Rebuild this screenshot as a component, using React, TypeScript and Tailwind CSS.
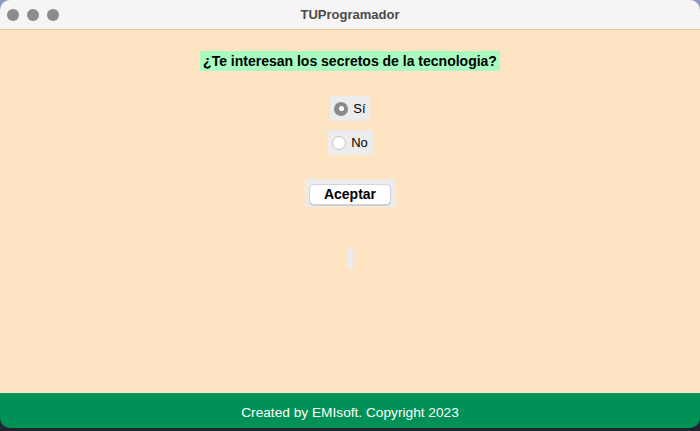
import { useState } from "react";

export default function App() {
  const [answer, setAnswer] = useState<"si" | "no">("si");

  return (
    <div className="h-[431px] w-[700px] overflow-hidden bg-linear-to-b from-[#8e9bc8] via-[#5b6488] to-[#1f2430] font-['Liberation_Sans',Arial,sans-serif]">
      <div className="flex h-[428px] w-[700px] flex-col overflow-hidden rounded-[10px]">
        {/* title bar */}
        <div className="relative flex h-[30px] shrink-0 items-center justify-center border-b border-[#e3c9a6] bg-[#f6f4f5]">
          <div className="absolute left-[7px] top-[9px] flex gap-[8px]">
            <span className="h-[12px] w-[12px] rounded-full bg-[#8b8b8b]" />
            <span className="h-[12px] w-[12px] rounded-full bg-[#8b8b8b]" />
            <span className="h-[12px] w-[12px] rounded-full bg-[#8b8b8b]" />
          </div>
          <span className="text-[13px] font-bold text-[#4a4a4a]">TUProgramador</span>
        </div>

        {/* content */}
        <div className="flex flex-1 flex-col items-center bg-[#ffe4c4] pt-[21px]">
          <div className="flex h-[20px] items-center bg-[#a9fcc1] px-[3px] text-[14px] font-bold text-black">
            ¿Te interesan los secretos de la tecnologia?
          </div>

          <RadioOption label="Sí" checked={answer === "si"} onClick={() => setAnswer("si")} className="mt-[25px] w-[40px]" />
          <RadioOption label="No" checked={answer === "no"} onClick={() => setAnswer("no")} className="mt-[9px] w-[45px]" />

          <div className="mt-[24px] flex h-[28px] w-[90px] items-center justify-center bg-[#ececec]">
            <button className="mt-[2px] flex h-[21px] w-[82px] items-center justify-center rounded-[5px] border border-[#d4d4d4] bg-white text-[14px] font-bold text-black shadow-[0_1px_1px_rgba(0,0,0,0.15)]">
              Aceptar
            </button>
          </div>

          <div className="mt-[40px] h-[22px] w-[6px] bg-[#ececec]" />
        </div>

        {/* footer */}
        <div className="flex h-[35px] shrink-0 items-center justify-center bg-[#009157] pt-[5px] text-[13.7px] text-white">
          Created by EMIsoft. Copyright 2023
        </div>
      </div>
    </div>
  );
}

type RadioOptionProps = {
  label: string;
  checked: boolean;
  onClick: () => void;
  className?: string;
};

function RadioOption({ label, checked, onClick, className }: RadioOptionProps) {
  return (
    <div onClick={onClick} className={`flex h-[25px] cursor-default items-center justify-center gap-[5px] bg-[#ececec] ${className ?? ""}`}>
      {checked ? (
        <span className="flex h-[14px] w-[14px] items-center justify-center rounded-full bg-[#8a8a8a]">
          <span className="h-[5px] w-[5px] rounded-full bg-white" />
        </span>
      ) : (
        <span className="h-[14px] w-[14px] rounded-full border border-[#c4c4c4] bg-white" />
      )}
      <span className="text-[13px] text-black">{label}</span>
    </div>
  );
}
